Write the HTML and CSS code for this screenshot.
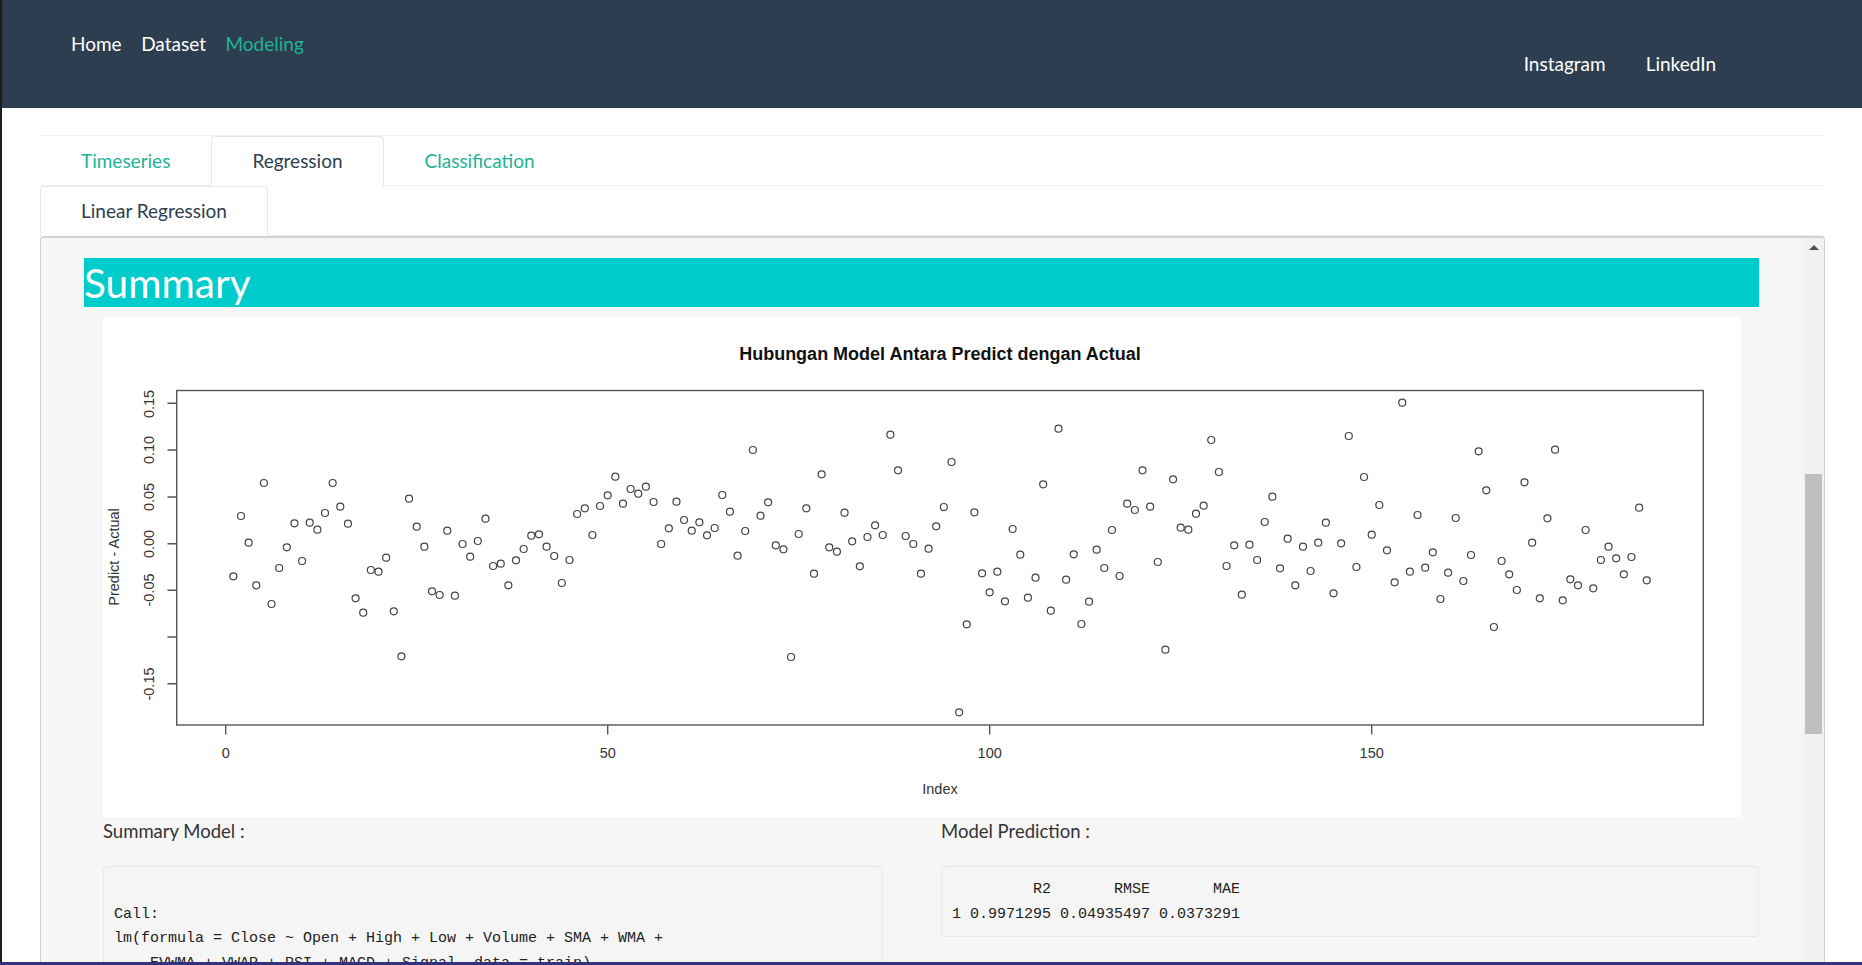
FILE: index.html
```html
<!DOCTYPE html>
<html lang="en">
<head>
  <meta charset="UTF-8" />
  <title>Modeling</title>
  <link rel="stylesheet" href="styles.css">
</head>
<body>
  <nav class="navbar">
    <ul class="nav-left">
      <li><a href="#">Home</a></li>
      <li><a href="#">Dataset</a></li>
      <li><a href="#" class="current">Modeling</a></li>
    </ul>
    <ul class="nav-right">
      <li><a href="#">Instagram</a></li>
      <li><a href="#">LinkedIn</a></li>
    </ul>
  </nav>

  <main class="content">
    <div class="tab-rule"></div>
    <ul class="tabs">
      <li><a href="#">Timeseries</a></li>
      <li class="active"><a href="#">Regression</a></li>
      <li><a href="#">Classification</a></li>
    </ul>
    <ul class="tabs">
      <li class="active"><a href="#">Linear Regression</a></li>
    </ul>

    <div class="well">
      <div class="well-body">
        <h1 class="section-title">Summary</h1>

        <svg id="plot" class="plot" viewBox="103 317 1638 500" role="img" aria-label="Hubungan Model Antara Predict dengan Actual">
          <text class="plot-title" x="940" y="359.5" text-anchor="middle">Hubungan Model Antara Predict dengan Actual</text>
          <rect class="plot-box" x="176.7" y="390.5" width="1526.6" height="334.5" />
          <path class="plot-axis" d="M167.5 403.3H176.7M167.5 450H176.7M167.5 497H176.7M167.5 543.7H176.7M167.5 590.3H176.7M167.5 637H176.7M167.5 683.7H176.7M225.7 725V734.5M607.7 725V734.5M989.7 725V734.5M1371.7 725V734.5" />
          <text transform="translate(154 404) rotate(-90)" text-anchor="middle">0.15</text>
          <text transform="translate(154 450) rotate(-90)" text-anchor="middle">0.10</text>
          <text transform="translate(154 497) rotate(-90)" text-anchor="middle">0.05</text>
          <text transform="translate(154 544) rotate(-90)" text-anchor="middle">0.00</text>
          <text transform="translate(154 590) rotate(-90)" text-anchor="middle">-0.05</text>
          <text transform="translate(154 684) rotate(-90)" text-anchor="middle">-0.15</text>
          <text transform="translate(119 557) rotate(-90)" text-anchor="middle">Predict - Actual</text>
          <text x="225.7" y="758" text-anchor="middle">0</text>
          <text x="607.7" y="758" text-anchor="middle">50</text>
          <text x="989.7" y="758" text-anchor="middle">100</text>
          <text x="1371.7" y="758" text-anchor="middle">150</text>
          <text x="940" y="794" text-anchor="middle">Index</text>
        </svg>

        <div class="results">
          <section>
            <h4>Summary Model :</h4>
            <pre class="output">

Call:
lm(formula = Close ~ Open + High + Low + Volume + SMA + WMA + 
    EVWMA + VWAP + RSI + MACD + Signal, data = train)</pre>
          </section>
          <section>
            <h4>Model Prediction :</h4>
            <pre class="output">         R2       RMSE       MAE
1 0.9971295 0.04935497 0.0373291</pre>
          </section>
        </div>
      </div>

      <div class="scrollbar">
        <span class="scroll-up"></span>
        <span class="scroll-thumb"></span>
      </div>
    </div>
  </main>

  <div class="window-edge"></div>
  <script src="plot.js"></script>
</body>
</html>
```

FILE: styles.css
```css
* {
  box-sizing: border-box;
}

html, body {
  height: 100%;
}

body {
  margin: 0;
  height: 965px;
  overflow: hidden;
  border-left: 2px solid #1c1c1c;
  background-color: #fff;
  font-family: Lato, "Liberation Sans", sans-serif;
  color: #2c3e50;
}

ul {
  list-style: none;
  margin: 0;
  padding: 0;
}

a {
  text-decoration: none;
}

/* navbar */
.navbar {
  display: flex;
  justify-content: space-between;
  height: 108px;
  padding: 32px 146px 0 69px;
  background-color: #2c3e50;
  font-size: 19px;
}

.nav-left, .nav-right {
  display: flex;
}

.nav-left {
  gap: 19.5px;
}

.nav-right {
  gap: 40px;
  padding-top: 20px;
}

.navbar a {
  color: #fff;
}

.navbar a.current {
  color: #22b395;
}

/* tabs */
.content {
  padding: 27px 37px 0 38px;
}

.tab-rule {
  border-bottom: 1px solid #ecf0f1;
}

.tabs {
  display: flex;
  height: 50px;
  border-bottom: 1px solid #ecf0f1;
  font-size: 19px;
}

.tabs a {
  display: block;
  height: 50px;
  padding: 12px 40px 0;
  color: #22b395;
  border: 1px solid transparent;
  border-bottom: none;
  border-radius: 4px 4px 0 0;
}

.tabs .active a {
  color: #2c3e50;
  background-color: #fff;
  border-color: #e6e9ea;
}

/* panel with its own scrollbar */
.well {
  display: flex;
  height: 735px;
  overflow: hidden;
  background-color: #f6f6f6;
  border: 1px solid #d2d2d2;
  border-top-width: 2px;
  border-radius: 4px 4px 0 0;
}

.well-body {
  flex: 1;
  min-width: 0;
  padding: 20px 44px 0 43px;
}

.section-title {
  height: 49px;
  margin: 0 0 10px;
  background-color: #00cccc;
  color: #fff;
  font-size: 40.5px;
  font-weight: 400;
  line-height: 49px;
}

.plot {
  display: block;
  width: 1638px;
  height: 500px;
  margin-left: 19px;
  background-color: #fff;
  font-family: "Liberation Sans", Arial, sans-serif;
  font-size: 14.5px;
  fill: #333;
}

.plot-title {
  font-size: 18px;
  font-weight: bold;
  fill: #111;
}

.plot-box, .plot-axis {
  fill: none;
  stroke: #555;
  stroke-width: 1.4;
}

.plot-point {
  fill: none;
  stroke: #444;
  stroke-width: 1.2;
}

.results {
  display: grid;
  grid-template-columns: 780px 818px;
  gap: 58px;
  margin-left: 19px;
}

.results h4 {
  margin: 0;
  padding-top: 3px;
  height: 49px;
  font-size: 18.5px;
  font-weight: 400;
  line-height: 23px;
  color: #333;
}

.output {
  margin: 0;
  padding: 11px 10px 9px;
  background-color: #f5f5f5;
  border: 1px solid #e8e8e8;
  border-radius: 4px;
  font-family: "Liberation Mono", monospace;
  font-size: 15px;
  line-height: 24.6px;
  color: #222;
}

.scrollbar {
  flex: none;
  width: 21px;
  padding: 0 2px;
  background-color: #f1f1f1;
}

.scroll-up {
  display: block;
  width: 0;
  margin: 7px auto 0;
  border-left: 5px solid transparent;
  border-right: 5px solid transparent;
  border-bottom: 5px solid #505050;
}

.scroll-thumb {
  display: block;
  height: 260px;
  margin-top: 224px;
  background-color: #bfbfbf;
}

/* strip of the desktop under the window */
.window-edge {
  position: fixed;
  left: 0;
  right: 0;
  bottom: 0;
  height: 3px;
  background-color: #33337c;
}
```

FILE: plot.js
```js
// y position of each residual, index 1 to 186
const ys = [
  576.3, 516, 542.7, 585.3, 483, 604, 568, 547.3, 523.3, 561,
  522.7, 529.7, 513, 483, 506.7, 523.7, 598.3, 612.7, 570, 571.7,
  557.7, 611.3, 656.3, 498.7, 526.7, 546.7, 591.3, 595, 530.7, 595.7,
  544, 556.7, 541, 518.7, 566, 563.7, 585.3, 560.3, 549, 535.7,
  534.3, 546.7, 556, 583, 560, 514, 508.3, 535, 506, 495.3,
  476.7, 503.7, 489, 493.7, 486.7, 502, 544, 528.3, 501.7, 520,
  530.7, 522.3, 535.3, 528, 495, 511.7, 555.7, 531, 450, 515.7,
  502.3, 545.3, 549.3, 657, 534, 508.3, 573.7, 474.3, 547.3, 551.7,
  512.7, 541.3, 566.3, 537, 525.3, 535, 434.7, 470.3, 536, 544,
  573.7, 548.7, 526.3, 507, 462, 712.3, 624.3, 512.3, 573.3, 592.3,
  571.7, 601.3, 529, 554.7, 597.7, 577.7, 484.3, 610.7, 428.7, 579.7,
  554.3, 624, 601.7, 549.7, 568, 530, 576, 503.7, 510, 470.3,
  506.7, 562, 649.7, 479.3, 527.7, 529.7, 513.7, 505.7, 440, 472,
  566, 545.3, 594.7, 544.7, 560, 522, 496.7, 568.3, 538.7, 585.3,
  546.7, 571, 542.7, 522.7, 593.3, 543.3, 436, 567, 477, 534.7,
  505, 550.3, 582.3, 402.7, 571.7, 515, 567.7, 552.3, 599, 572.7,
  518, 581, 555, 451.3, 490.3, 627, 561, 574.3, 590, 482.3,
  542.7, 598.3, 518.3, 449.7, 600.3, 579.3, 585.3, 530, 588.3, 560,
  546.7, 558.3, 574.3, 557, 507.7, 580.3
];

const plot = document.getElementById('plot');
ys.forEach((y, i) => {
  const dot = document.createElementNS('http://www.w3.org/2000/svg', 'circle');
  dot.setAttribute('class', 'plot-point');
  dot.setAttribute('cx', 225.7 + 7.64 * (i + 1));
  dot.setAttribute('cy', y);
  dot.setAttribute('r', 3.5);
  plot.appendChild(dot);
});
```
